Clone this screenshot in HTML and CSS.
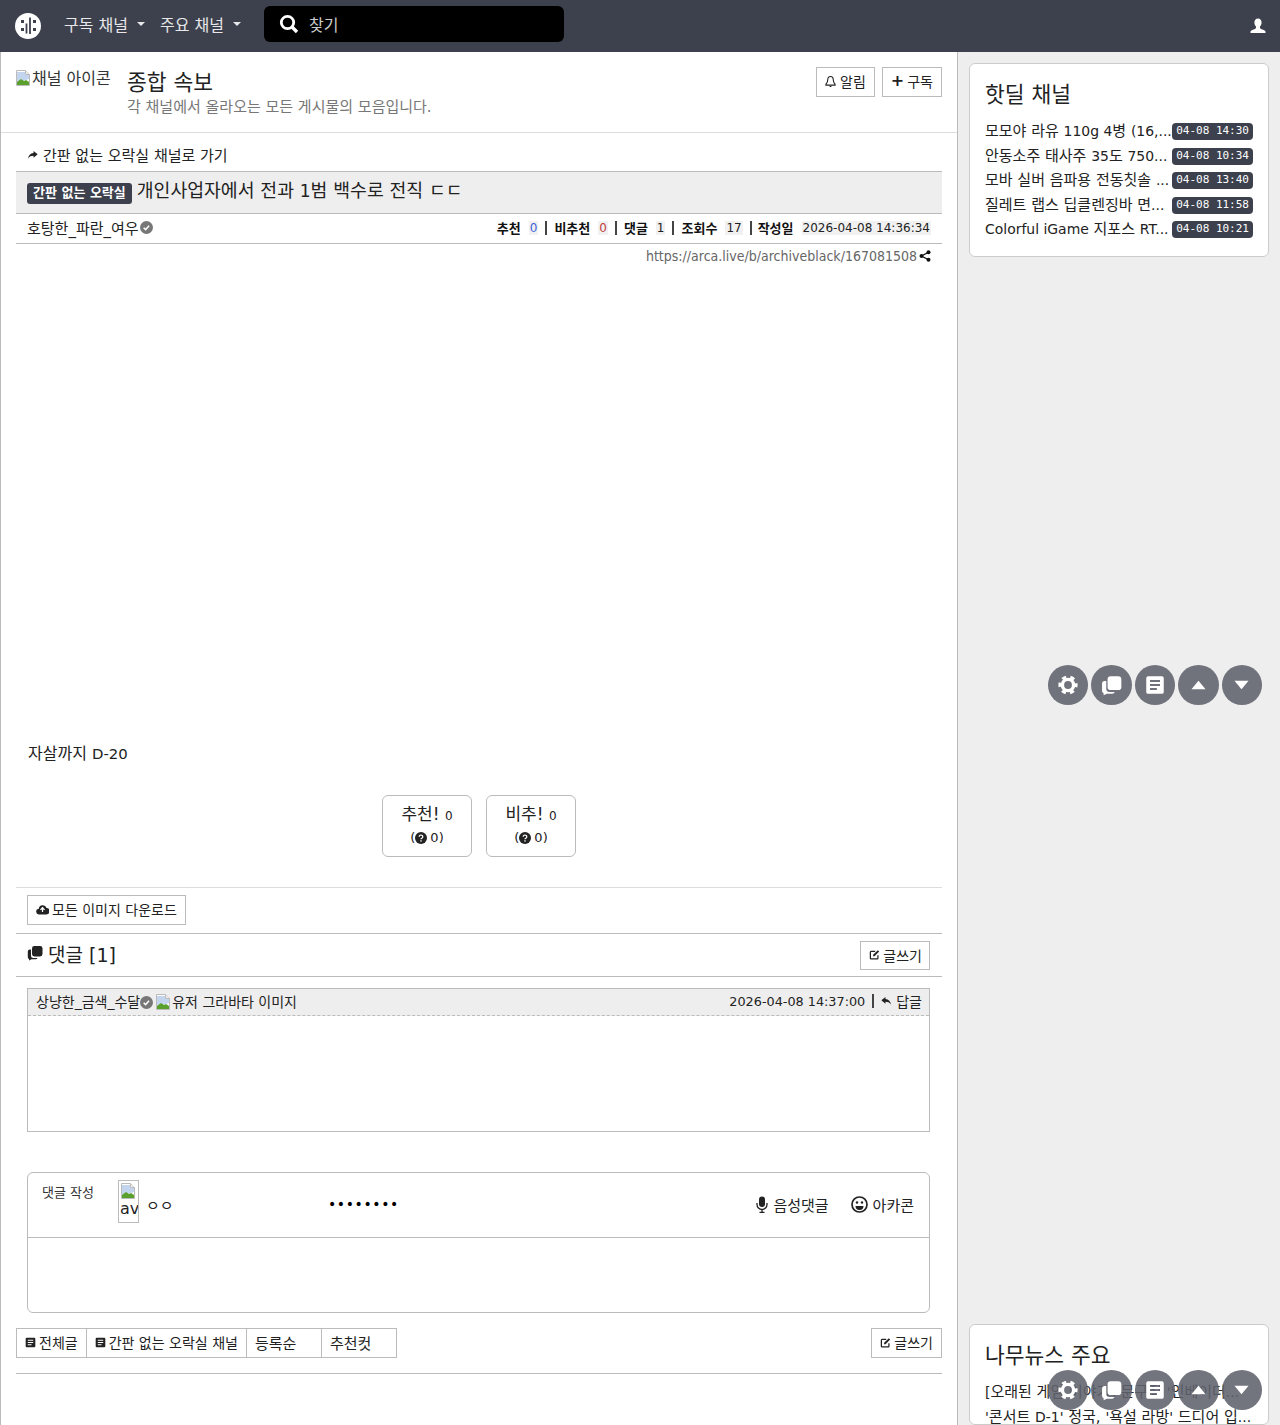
FILE: index.html
```html
<!DOCTYPE html>
<html lang="ko">
<head>
    <meta charset="UTF-8">
    <meta name="viewport" content="width=device-width, initial-scale=1.0">
    <title>개인사업자에서 전과 1범 백수로 전직 ㄷㄷ</title>
    <link rel="stylesheet" href="styles.css">
</head>

<body>
    <svg class="icon-defs" width="0" height="0">
        <defs>
            <symbol id="i-broken" viewBox="0 0 16 16">
                <path d="M1.5 .5h9l4 4v11h-13z" fill="#fff" stroke="#bbb"/>
                <path d="M10.5 .5v4h4" fill="#eee" stroke="#bbb"/>
                <path d="M2 2h8v3h4v4l-3 1-4 1-5 1z" fill="#c3d4ee"/>
                <path d="M2 15v-3l4-3 3 2 2-1 3 2v3z" fill="#5aa02c"/>
            </symbol>
            <symbol id="i-verified" viewBox="0 0 16 16">
                <circle cx="8" cy="8" r="8" fill="#777"/>
                <path d="M4.5 8.3l2.4 2.3 4.3-4.8" fill="none" stroke="#fff" stroke-width="1.8"/>
            </symbol>
            <symbol id="i-comments" viewBox="0 0 16 16">
                <path d="M.8 6.500a2 2 0 0 1 2-2h1.200v6a2.500 2.500 0 0 0 2.500 2.500h4a2 2 0 0 1-1.800 1.200H4.500L2 15.500v-1.600a2 2 0 0 1-1.200-1.900z" fill="currentColor"/>
                <rect x="5" y="1" width="10.500" height="10.500" rx="2.400" fill="currentColor"/>
            </symbol>
            <symbol id="i-list" viewBox="0 0 16 16">
                <path fill-rule="evenodd" fill="currentColor" d="M2.500 1h11A1.500 1.500 0 0 1 15 2.500v11a1.500 1.500 0 0 1-1.500 1.500h-11A1.500 1.500 0 0 1 1 13.500v-11A1.500 1.500 0 0 1 2.500 1zM4 4v1.600h8V4zM4 7.200v1.600h8V7.200zM4 10.400V12h5.500v-1.600z"/>
            </symbol>
            <symbol id="i-edit" viewBox="0 0 16 16">
                <path d="M13 9v4.500a1 1 0 0 1-1 1H3a1 1 0 0 1-1-1v-9a1 1 0 0 1 1-1h6" fill="none" stroke="currentColor" stroke-width="1.800"/>
                <path d="M6 8.500L12.800 1.700l2 2L8 10.500H6z" fill="currentColor"/>
            </symbol>
            <symbol id="i-question" viewBox="0 0 16 16">
                <circle cx="8" cy="8" r="8" fill="currentColor"/>
                <path d="M5.600 6.200a2.400 2.200 0 1 1 3.700 1.900c-.9.500-1.300.9-1.300 1.700" fill="none" stroke="#fff" stroke-width="1.700"/>
                <rect x="7.100" y="11" width="1.800" height="1.800" fill="#fff"/>
            </symbol>
            <symbol id="i-gear" viewBox="0 0 20 20">
                <circle cx="10" cy="10" r="5.600" fill="none" stroke="currentColor" stroke-width="3.400"/>
                <circle cx="10" cy="10" r="8" fill="none" stroke="currentColor" stroke-width="3.200" stroke-dasharray="4.200 4.180" stroke-dashoffset="2.100"/>
            </symbol>
            <symbol id="i-up" viewBox="0 0 16 10">
                <path d="M8 .5L15.500 9.500H.5z" fill="currentColor"/>
            </symbol>
            <symbol id="i-down" viewBox="0 0 16 10">
                <path d="M8 9.500L15.500 .5H.5z" fill="currentColor"/>
            </symbol>
            <symbol id="i-reply" viewBox="0 0 16 14">
                <path d="M6.500 1L.5 6l6 5V8c3.500 0 6 .8 8 4.500C14 7.500 11 4.300 6.500 4z" fill="currentColor"/>
            </symbol>
        </defs>
    </svg>

    <nav class="navbar">
        <a class="logo" href="#">
            <svg width="26" height="26" viewBox="0 0 26 26">
                <circle cx="13" cy="13" r="13" fill="#fff"/>
                <path d="M11.500 10.500v10M15 4.500v16.500" stroke="#3d414d" stroke-width="1.800" fill="none"/>
                <rect x="6" y="7" width="3" height="3" fill="#3d414d"/>
                <rect x="6" y="15" width="3" height="3" fill="#3d414d"/>
                <rect x="18" y="7" width="3" height="3" fill="#3d414d"/>
                <rect x="18" y="15" width="3" height="3" fill="#3d414d"/>
            </svg>
        </a>
        <a class="nav-link" href="#">구독 채널<span class="caret"></span></a>
        <a class="nav-link" href="#">주요 채널<span class="caret"></span></a>
        <div class="nav-search">
            <svg width="20" height="20" viewBox="0 0 20 20">
                <circle cx="8.500" cy="8.500" r="6.200" fill="none" stroke="#fff" stroke-width="2.800"/>
                <path d="M13 13l5 5" stroke="#fff" stroke-width="3.400"/>
            </svg>
            <span>찾기</span>
        </div>
        <a class="nav-user" href="#">
            <svg width="16" height="16" viewBox="0 0 16 16">
                <path d="M8 .5c2.300 0 3.600 1.800 3.600 4.100 0 1.600-.7 3-1.600 3.900v1.300c0 .8 1 1.200 2.500 1.800 1.600.6 3 1.200 3 2.300v1H.5v-1c0-1.100 1.400-1.700 3-2.300C5 11 6 10.600 6 9.800V8.500C5.100 7.600 4.400 6.200 4.400 4.600 4.400 2.300 5.700.5 8 .5z" fill="#fff"/>
            </svg>
        </a>
    </nav>

    <div class="layout">
        <main class="main">
            <header class="board-head">
                <div class="board-icon"><svg class="broken"><use href="#i-broken"/></svg>채널 아이콘</div>
                <div class="board-info">
                    <h2>종합 속보</h2>
                    <p>각 채널에서 올라오는 모든 게시물의 모음입니다.</p>
                </div>
                <div class="board-btns">
                    <a class="btn" href="#">
                        <svg width="11" height="13" viewBox="0 0 12 14"><path d="M6 1.500c-2 0-3 1.500-3 3.500 0 3-1 4-2 5v1h10v-1c-1-1-2-2-2-5 0-2-1-3.500-3-3.500zM5 12.500h2" fill="none" stroke="currentColor" stroke-width="1.200"/></svg>
                        알림
                    </a>
                    <a class="btn" href="#"><span class="plus">+</span> 구독</a>
                </div>
            </header>

            <div class="article">
                <a class="go-channel" href="#">
                    <svg width="11" height="10" viewBox="0 0 16 14"><path d="M9.500 1l6 5-6 5V8c-3.500 0-6 .8-8 4.500C2 7.500 5 4.300 9.500 4z" fill="currentColor"/></svg>
                    간판 없는 오락실 채널로 가기
                </a>
                <div class="title-row">
                    <span class="badge">간판 없는 오락실</span>
                    <span class="title-text">개인사업자에서 전과 <span class="en">1</span>범 백수로 전직 ㄷㄷ</span>
                </div>
                <div class="info-row">
                    <span class="author">호탕한_파란_여우<svg class="verified"><use href="#i-verified"/></svg></span>
                    <div class="stats">
                        <b>추천</b><span class="num up">0</span><i class="sep"></i>
                        <b>비추천</b><span class="num down">0</span><i class="sep"></i>
                        <b>댓글</b><span class="num">1</span><i class="sep"></i>
                        <b>조회수</b><span class="num">17</span><i class="sep"></i>
                        <b>작성일</b><span class="num date">2026-04-08 14:36:34</span>
                    </div>
                </div>
                <div class="url-row">
                    <span>https://arca.live/b/archiveblack/167081508</span>
                    <svg width="12" height="12" viewBox="0 0 12 12"><circle cx="9.500" cy="2.200" r="2" fill="currentColor"/><circle cx="2.500" cy="6" r="2" fill="currentColor"/><circle cx="9.500" cy="9.800" r="2" fill="currentColor"/><path d="M9.500 2.200L2.500 6l7 3.800" fill="none" stroke="currentColor" stroke-width="1.300"/></svg>
                </div>

                <div class="article-body">
                    <p>자살까지 <span class="en">D-20</span></p>
                </div>

                <div class="votes">
                    <a class="vote" href="#">
                        <div>추천! <small>0</small></div>
                        <div class="vote-sub">(<svg class="q"><use href="#i-question"/></svg> 0)</div>
                    </a>
                    <a class="vote" href="#">
                        <div>비추! <small>0</small></div>
                        <div class="vote-sub">(<svg class="q"><use href="#i-question"/></svg> 0)</div>
                    </a>
                </div>

                <div class="download-row">
                    <a class="btn" href="#">
                        <svg width="13" height="11" viewBox="0 0 16 13"><path d="M4 12.500a3.500 3.500 0 0 1-.6-7A5 5 0 0 1 13 4.500a4 4 0 0 1-.5 8z" fill="currentColor"/><path d="M8 3.500v6M5.500 7L8 4.200 10.500 7" fill="none" stroke="#fff" stroke-width="1.500"/></svg>
                        모든 이미지 다운로드
                    </a>
                </div>

                <div class="comment-head">
                    <h4><svg class="c-icon"><use href="#i-comments"/></svg> 댓글 [1]</h4>
                    <a class="btn" href="#"><svg class="edit"><use href="#i-edit"/></svg> 글쓰기</a>
                </div>

                <div class="comment-box">
                    <div class="comment-top">
                        <span class="comment-user">상냥한_금색_수달<svg class="verified"><use href="#i-verified"/></svg><svg class="broken"><use href="#i-broken"/></svg>유저 그라바타 이미지</span>
                        <span class="comment-meta"><span class="comment-time">2026-04-08 14:37:00</span><i class="sep"></i><svg width="11" height="10"><use href="#i-reply"/></svg> 답글</span>
                    </div>
                </div>

                <div class="write-box">
                    <div class="write-top">
                        <span class="write-label">댓글 작성</span>
                        <span class="avatar"><svg class="broken"><use href="#i-broken"/></svg><span>av</span></span>
                        <span class="nick">ㅇㅇ</span>
                        <span class="dots">••••••••</span>
                        <span class="write-tools">
                            <span class="tool">
                                <svg width="12" height="17" viewBox="0 0 12 17"><rect x="3" y="0.500" width="6" height="10.500" rx="3" fill="currentColor"/><path d="M1 7v1.500a5 5 0 0 0 10 0V7M6 13.500v3M3.500 16.500h5" fill="none" stroke="currentColor" stroke-width="1.300"/></svg>
                                음성댓글
                            </span>
                            <span class="tool">
                                <svg width="17" height="17" viewBox="0 0 17 17"><circle cx="8.500" cy="8.500" r="7.500" fill="none" stroke="currentColor" stroke-width="1.700"/><circle cx="6" cy="6.500" r="1.200" fill="currentColor"/><circle cx="11" cy="6.500" r="1.200" fill="currentColor"/><path d="M4.500 10h8a4 4 0 0 1-8 0z" fill="currentColor"/></svg>
                                아카콘
                            </span>
                        </span>
                    </div>
                    <div class="write-area"></div>
                </div>

                <div class="bottom-bar">
                    <div class="btn-group">
                        <a class="btn" href="#"><svg class="list"><use href="#i-list"/></svg> 전체글</a>
                        <a class="btn" href="#"><svg class="list"><use href="#i-list"/></svg> 간판 없는 오락실 채널</a>
                        <a class="btn wide" href="#">등록순</a>
                        <a class="btn wide" href="#">추천컷</a>
                    </div>
                    <a class="btn" href="#"><svg class="edit"><use href="#i-edit"/></svg> 글쓰기</a>
                </div>
                <hr class="bottom-line">
            </div>
        </main>

        <aside class="sidebar">
            <section class="card">
                <h3>핫딜 채널</h3>
                <a class="card-item" href="#"><span class="item-text">모모야 라유 <span class="en">110g 4</span>병 <span class="en">(16,...</span></span><span class="time">04-08 14:30</span></a>
                <a class="card-item" href="#"><span class="item-text">안동소주 태사주 <span class="en">35</span>도 <span class="en">750...</span></span><span class="time">04-08 10:34</span></a>
                <a class="card-item" href="#"><span class="item-text">모바 실버 음파용 전동칫솔 <span class="en">...</span></span><span class="time">04-08 13:40</span></a>
                <a class="card-item" href="#"><span class="item-text">질레트 랩스 딥클렌징바 면<span class="en">...</span></span><span class="time">04-08 11:58</span></a>
                <a class="card-item" href="#"><span class="item-text"><span class="en">Colorful iGame</span> 지포스 <span class="en">RT...</span></span><span class="time">04-08 10:21</span></a>
            </section>
            <section class="card card-news">
                <h3>나무뉴스 주요</h3>
                <a class="card-item" href="#"><span class="item-text"><span class="en">[</span>오래된 게임 이야기<span class="en">]</span> 문구점 <span class="en">'</span>인베이더<span class="en">...</span></span></a>
                <a class="card-item" href="#"><span class="item-text"><span class="en">'</span>콘서트 <span class="en">D-1'</span> 정국, <span class="en">'</span>욕설 라방<span class="en">'</span> 드디어 입<span class="en">...</span></span></a>
            </section>
        </aside>
    </div>

    <div class="float-tools tools-top">
        <a class="round" href="#"><svg width="20" height="20"><use href="#i-gear"/></svg></a>
        <a class="round" href="#"><svg width="21" height="21"><use href="#i-comments"/></svg></a>
        <a class="round" href="#"><svg width="20" height="20"><use href="#i-list"/></svg></a>
        <a class="round" href="#"><svg width="15" height="10"><use href="#i-up"/></svg></a>
        <a class="round" href="#"><svg width="15" height="10"><use href="#i-down"/></svg></a>
    </div>
    <div class="float-tools tools-bottom">
        <a class="round" href="#"><svg width="20" height="20"><use href="#i-gear"/></svg></a>
        <a class="round" href="#"><svg width="21" height="21"><use href="#i-comments"/></svg></a>
        <a class="round" href="#"><svg width="20" height="20"><use href="#i-list"/></svg></a>
        <a class="round" href="#"><svg width="15" height="10"><use href="#i-up"/></svg></a>
        <a class="round" href="#"><svg width="15" height="10"><use href="#i-down"/></svg></a>
    </div>
</body>
</html>
```

FILE: styles.css
```css
:root {
    --nav-color: #3d414d;
    --line-color: #bbb;
    --soft-line: #ddd;
    --panel-color: #eee;
}

* {
    box-sizing: border-box;
    margin: 0;
    padding: 0;
}

html, body {
    height: 100vh;
    overflow: hidden;
}

body {
    position: relative;
    font-family: "DejaVu Sans", "Noto Sans CJK KR", sans-serif;
    font-size: 14px;
    color: #222;
    background-color: var(--panel-color);
}

a {
    color: inherit;
    text-decoration: none;
}

svg {
    flex-shrink: 0;
}

.icon-defs {
    position: absolute;
}

/* latin runs sit a little smaller than the hangul around them */
.en {
    font-size: 0.93em;
}

/* navbar */
.navbar {
    display: flex;
    align-items: center;
    height: 52px;
    padding: 0 14px 0 15px;
    background-color: var(--nav-color);
    color: #fff;
}

.logo {
    display: flex;
    margin-right: 23px;
}

.nav-link {
    display: flex;
    align-items: center;
    margin-right: 15px;
    padding-bottom: 4px;
    font-size: 16px;
    color: #e8e8ea;
}

.caret {
    margin-left: 9px;
    border-top: 4px solid #e8e8ea;
    border-left: 4px solid transparent;
    border-right: 4px solid transparent;
}

.nav-search {
    display: flex;
    align-items: center;
    gap: 10px;
    width: 300px;
    height: 36px;
    margin-left: 8px;
    margin-bottom: 4px;
    padding-left: 15px;
    border-radius: 6px;
    background-color: #000;
    font-size: 16px;
    color: #ccc;
}

.nav-user {
    display: flex;
    margin-left: auto;
}

/* layout */
.layout {
    display: grid;
    grid-template-columns: 958px minmax(0, 1fr);
    height: 1373px;
    overflow: hidden;
}

.main {
    border-left: 1px solid var(--line-color);
    border-right: 1px solid var(--line-color);
    background-color: #fff;
}

.sidebar {
    display: flex;
    flex-direction: column;
    justify-content: space-between;
    padding: 11px 11px 0;
}

/* board head */
.board-head {
    display: flex;
    align-items: flex-start;
    height: 81px;
    padding: 15px 15px 0;
    border-bottom: 1px solid var(--soft-line);
}

.board-icon {
    display: flex;
    align-items: flex-start;
    width: 111px;
    padding-top: 1px;
    line-height: 22px;
    font-size: 16px;
    color: #333;
    white-space: nowrap;
}

.broken {
    width: 16px;
    height: 16px;
    vertical-align: -3px;
}

.board-icon .broken {
    margin: 2px 1px 0 -1px;
}

.board-info h2 {
    margin-top: 2px;
    font-size: 21.500px;
    font-weight: 400;
    line-height: 28px;
    color: #222;
}

.board-info p {
    margin-top: 0;
    font-size: 15px;
    line-height: 20px;
    color: #777;
}

.board-btns {
    display: flex;
    gap: 7px;
    margin-left: auto;
}

.btn {
    display: inline-flex;
    align-items: center;
    gap: 3px;
    height: 30px;
    padding: 0 8px 2px;
    border: 1px solid var(--line-color);
    background-color: #fff;
    font-size: 14px;
    color: #222;
    white-space: nowrap;
}

.board-btns .btn {
    gap: 4px;
}

.plus {
    margin-right: -1px;
    font-size: 16px;
    font-weight: 700;
    line-height: 1;
}

/* article */
.article {
    padding: 0 15px;
}

.go-channel {
    display: flex;
    align-items: center;
    gap: 5px;
    height: 38px;
    padding: 5px 0 0 11px;
    font-size: 15px;
}

.title-row {
    display: flex;
    align-items: center;
    gap: 5px;
    height: 43px;
    padding-left: 11px;
    border-top: 1px solid var(--line-color);
    border-bottom: 1px solid var(--line-color);
    background-color: var(--panel-color);
}

.badge {
    padding: 0 6px;
    height: 21px;
    line-height: 20px;
    border-radius: 3px;
    background-color: var(--nav-color);
    color: #fff;
    font-size: 13px;
    font-weight: 700;
    margin-top: 1px;
}

.title-text {
    font-size: 18.300px;
    margin-bottom: 8px;
}

.info-row {
    display: flex;
    align-items: center;
    justify-content: space-between;
    height: 30px;
    padding: 0 11px;
    border-bottom: 1px solid var(--line-color);
}

.author {
    display: flex;
    align-items: center;
    padding-bottom: 2px;
    font-size: 15px;
}

.author .verified {
    margin-left: 1px;
}

.verified {
    width: 13px;
    height: 13px;
    vertical-align: -2px;
}

.stats {
    display: flex;
    align-items: center;
    padding-bottom: 2px;
    font-size: 12px;
}

.stats b {
    margin-right: 8px;
    font-size: 13px;
    color: #111;
}

.num {
    padding: 0 1px;
    background-color: #f1f1f1;
}

.num.up {
    color: #3d63d8;
}

.num.down {
    color: #c23d3d;
}

.sep {
    display: inline-block;
    width: 2px;
    height: 14px;
    margin: 0 7px;
    background-color: #444;
}

.stats .sep:nth-of-type(4) {
    margin-right: 6px;
}

.url-row {
    display: flex;
    align-items: center;
    justify-content: flex-end;
    gap: 2px;
    height: 25px;
    padding-right: 11px;
    padding-bottom: 2px;
    font-family: "DejaVu Sans Condensed", "DejaVu Sans", sans-serif;
    font-size: 14px;
    color: #666;
}

.url-row svg {
    color: #111;
}

.article-body {
    height: 526px;
    padding: 473px 12px 0;
    font-size: 16px;
    line-height: 24px;
}

.votes {
    display: flex;
    justify-content: center;
    gap: 14px;
    height: 93px;
    border-bottom: 1px solid var(--soft-line);
}

.vote {
    display: flex;
    flex-direction: column;
    align-items: center;
    justify-content: center;
    gap: 5px;
    width: 90px;
    height: 62px;
    padding-bottom: 7px;
    border: 1px solid var(--line-color);
    border-radius: 6px;
    font-size: 17px;
}

.vote small {
    font-size: 12px;
}

.vote-sub {
    display: flex;
    align-items: center;
    font-size: 13px;
}

.q {
    width: 12px;
    height: 12px;
    margin-right: 3px;
}

.download-row {
    height: 46px;
    padding: 7px 0 0 11px;
    border-bottom: 1px solid var(--line-color);
}

.comment-head {
    display: flex;
    align-items: center;
    justify-content: space-between;
    height: 43px;
    padding: 0 12px 0 11px;
    border-bottom: 1px solid var(--line-color);
}

.comment-head h4 {
    display: flex;
    align-items: center;
    gap: 5px;
    padding-bottom: 4px;
    font-size: 19px;
    font-weight: 400;
}

.comment-head .btn {
    height: 29px;
    margin-top: 1px;
    padding: 0 7px 2px 8px;
}

.c-icon {
    width: 16px;
    height: 16px;
}

.edit, .list {
    width: 11px;
    height: 11px;
}

.comment-box {
    height: 144px;
    margin: 11px 12px 0 11px;
    border: 1px solid var(--line-color);
}

.comment-top {
    display: flex;
    align-items: center;
    justify-content: space-between;
    height: 27px;
    padding: 0 7px 3px 8px;
    border-bottom: 1px dashed var(--line-color);
    background-color: var(--panel-color);
    font-size: 14px;
}

.comment-user .broken {
    margin: 0 1px 0 2px;
}

.comment-meta {
    display: flex;
    align-items: center;
}

.comment-time {
    margin-top: 1px;
    font-size: 12.800px;
}

.comment-meta svg {
    margin-right: 4px;
}

.write-box {
    height: 141px;
    margin: 40px 12px 0 11px;
    border: 1px solid var(--line-color);
    border-radius: 6px;
}

.write-top {
    display: flex;
    align-items: flex-start;
    height: 65px;
    padding: 7px 15px 0 14px;
    border-bottom: 1px solid var(--line-color);
}

.write-label {
    width: 76px;
    margin-top: 2px;
    font-size: 13px;
    color: #333;
}

.avatar {
    display: flex;
    flex-direction: column;
    width: 21px;
    height: 43px;
    padding: 2px 1px 0;
    border: 1px solid var(--line-color);
    font-size: 16px;
    overflow: hidden;
}

.nick {
    width: 182px;
    margin: 14px 0 0 7px;
    font-size: 15px;
}

.dots {
    margin-top: 16px;
    font-size: 14px;
    letter-spacing: 0.6px;
    color: #000;
}

.write-tools {
    display: flex;
    gap: 22px;
    margin: 14px 0 0 auto;
}

.tool {
    display: flex;
    align-items: center;
    gap: 5px;
    font-size: 15px;
}

.bottom-bar {
    display: flex;
    justify-content: space-between;
    margin-top: 15px;
}

.btn-group {
    display: flex;
}

.btn-group .btn {
    margin-right: -1px;
}

.btn-group .btn.wide {
    width: 76px;
    font-size: 15px;
}

.bottom-line {
    margin-top: 15px;
    border: 0;
    border-top: 1px solid var(--line-color);
}

/* sidebar cards */
.card {
    padding: 17px 15px 15px;
    border: 1px solid #ccc;
    border-radius: 6px;
    background-color: #fff;
}

.card h3 {
    margin-bottom: 9.500px;
    font-size: 21.500px;
    font-weight: 400;
    line-height: 28px;
}

.card-news {
    height: 101px;
    overflow: hidden;
    flex-shrink: 0;
}

.card-item {
    display: flex;
    align-items: center;
    justify-content: space-between;
    gap: 2px;
    height: 24.500px;
    font-size: 15px;
}

.item-text {
    flex: 1;
    min-width: 0;
    margin-bottom: 2px;
    white-space: nowrap;
}

.time {
    flex-shrink: 0;
    margin-top: 2px;
    padding: 0 4px;
    height: 17px;
    line-height: 16px;
    border-radius: 4px;
    background-color: var(--nav-color);
    color: #fff;
    font-family: "DejaVu Sans Mono", monospace;
    font-size: 11px;
}

/* floating tools */
.float-tools {
    position: absolute;
    right: 18px;
    display: flex;
    gap: 3px;
}

.tools-top {
    top: 665px;
}

.tools-bottom {
    top: 1370px;
}

.round {
    display: flex;
    align-items: center;
    justify-content: center;
    width: 40.500px;
    height: 40px;
    border-radius: 50%;
    background-color: rgba(96, 98, 108, 0.88);
    color: #fff;
}
```
